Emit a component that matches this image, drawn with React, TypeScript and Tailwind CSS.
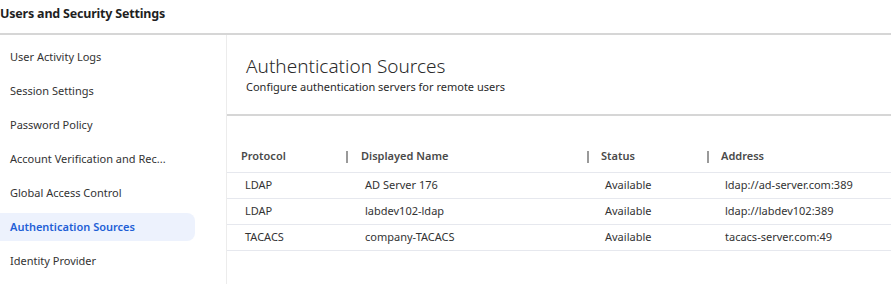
import React from "react";

const navItems = [
  "User Activity Logs",
  "Session Settings",
  "Password Policy",
  "Account Verification and Rec...",
  "Global Access Control",
  "Authentication Sources",
  "Identity Provider",
];

const rows = [
  ["LDAP", "AD Server 176", "Available", "ldap://ad-server.com:389"],
  ["LDAP", "labdev102-ldap", "Available", "ldap://labdev102:389"],
  ["TACACS", "company-TACACS", "Available", "tacacs-server.com:49"],
];

export default function App() {
  return (
    <div
      className="w-[891px] h-[284px] bg-white overflow-hidden text-[#333]"
      style={{ fontFamily: '"Noto Sans", "Open Sans", Arial, sans-serif' }}
    >
      <div className="h-[35px] flex items-center pb-[5px] border-b-2 border-[#d6d6d6]">
        <span className="text-[12.5px] font-bold text-[#1f1f1f] tracking-[-0.2px]">Users and Security Settings</span>
      </div>
      <div className="flex h-[249px]">
        <div className="w-[227px] shrink-0 border-r border-[#ececec] pt-[8px] flex flex-col gap-[6px]">
          {navItems.map((item) => {
            const active = item === "Authentication Sources";
            return (
              <div
                key={item}
                className={
                  active
                    ? "h-[28px] w-[195px] rounded-r-lg flex items-center pl-[10px] text-[11px] font-semibold text-[#1f5fd6] bg-[#edf2fd]"
                    : "h-[28px] w-[195px] flex items-center pl-[10px] text-[11px] text-[#333]"
                }
              >
                {item}
              </div>
            );
          })}
        </div>
        <div className="flex-1 flex flex-col">
          <div className="pl-[19px] pt-[19px] pb-[19px] border-b-2 border-[#d6d6d6]">
            <div className="text-[19px] leading-[24px] font-light text-[#2a2a2a]">Authentication Sources</div>
            <div className="text-[11px] leading-[16px] mt-[1px] text-[#2a2a2a]">Configure authentication servers for remote users</div>
          </div>
          <div className="mt-[25px]">
            <div className="grid grid-cols-[119px_241px_120px_1fr] h-[32px] items-center border-b border-[#e6e8ee] text-[11px] font-semibold text-[#4a4a4a]">
              <div className="pl-[14px]">Protocol</div>
              <div className="flex items-center">
                <span className="w-[2px] h-[12px] bg-[#9a9a9a] mr-[13px]" />
                Displayed Name
              </div>
              <div className="flex items-center">
                <span className="w-[2px] h-[12px] bg-[#9a9a9a] mr-[12px]" />
                Status
              </div>
              <div className="flex items-center">
                <span className="w-[2px] h-[12px] bg-[#9a9a9a] mr-[12px]" />
                Address
              </div>
            </div>
            {rows.map((r, i) => (
              <div
                key={i}
                className="grid grid-cols-[119px_241px_120px_1fr] h-[26px] items-center border-b border-[#e6e8ee] text-[11px] text-[#333]"
              >
                <div className="pl-[18px]">{r[0]}</div>
                <div className="pl-[19px]">{r[1]}</div>
                <div className="pl-[18px]">{r[2]}</div>
                <div className="pl-[18px]">{r[3]}</div>
              </div>
            ))}
          </div>
        </div>
      </div>
    </div>
  );
}
